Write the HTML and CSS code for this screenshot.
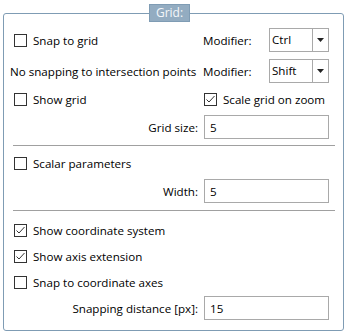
FILE: index.html
```html
<!DOCTYPE html>
<html lang="en">
<head>
    <meta charset="UTF-8">
    <title>Grid settings</title>
    <link rel="stylesheet" href="styles.css">
</head>
<body>
    <fieldset class="panel">
        <legend>Grid:</legend>

        <div class="row">
            <label class="check"><span class="box"></span>Snap to grid</label>
            <div class="right">
                <span class="mod-label">Modifier:</span>
                <div class="combo"><span class="combo-value">Ctrl</span><span class="combo-btn"><svg width="7" height="4" viewBox="0 0 7 4"><path d="M0 0h7L3.5 4z" fill="#222"/></svg></span></div>
            </div>
        </div>

        <div class="row spaced">
            <span class="text">No snapping to intersection points</span>
            <div class="right">
                <span class="mod-label">Modifier:</span>
                <div class="combo"><span class="combo-value">Shift</span><span class="combo-btn"><svg width="7" height="4" viewBox="0 0 7 4"><path d="M0 0h7L3.5 4z" fill="#222"/></svg></span></div>
            </div>
        </div>

        <div class="row">
            <label class="check"><span class="box"></span>Show grid</label>
            <div class="right">
                <label class="check flush"><span class="box"><svg width="11" height="11" viewBox="0 0 11 11"><path d="M1.5 5.5l2.5 2.5 5.5-6" fill="none" stroke="#333" stroke-width="1"/></svg></span>Scale grid on zoom</label>
            </div>
        </div>

        <div class="row">
            <span class="field-label">Grid size:</span>
            <input class="field" type="text" value="5">
        </div>

        <div class="sep"></div>

        <div class="row">
            <label class="check"><span class="box"></span>Scalar parameters</label>
        </div>

        <div class="row">
            <span class="field-label">Width:</span>
            <input class="field" type="text" value="5">
        </div>

        <div class="sep second"></div>

        <div class="row tight">
            <label class="check"><span class="box"><svg width="11" height="11" viewBox="0 0 11 11"><path d="M1.5 5.5l2.5 2.5 5.5-6" fill="none" stroke="#333" stroke-width="1"/></svg></span>Show coordinate system</label>
        </div>
        <div class="row tight">
            <label class="check"><span class="box"><svg width="11" height="11" viewBox="0 0 11 11"><path d="M1.5 5.5l2.5 2.5 5.5-6" fill="none" stroke="#333" stroke-width="1"/></svg></span>Show axis extension</label>
        </div>
        <div class="row tight">
            <label class="check"><span class="box"></span>Snap to coordinate axes</label>
        </div>
        <div class="row tight">
            <span class="field-label">Snapping distance [px]:</span>
            <input class="field" type="text" value="15">
        </div>
    </fieldset>
</body>
</html>
```

FILE: styles.css
```css
body {
    margin: 0;
    background-color: white;
    font-family: "Open Sans", "Noto Sans", sans-serif;
    font-size: 11.6px;
    color: #000;
}
.panel {
    box-sizing: border-box;
    width: 341px;
    margin: 4px 0 0 3px;
    padding: 4px 14px 9px 6px;
    border: 1px solid #7f9cb4;
    border-radius: 3px;
}
.panel legend {
    margin: 0 auto;
    padding: 0 6px;
    height: 18px;
    box-sizing: border-box;
    line-height: 16px;
    font-size: 12px;
    background-color: #93acc1;
    border: 1px solid #7f9cb4;
    color: #f4f7fa;
}
.row {
    display: flex;
    align-items: center;
    height: 28px;
}
.row.spaced {
    margin-top: 3px;
}
.row.tight {
    height: 26px;
}
.text {
    flex: 1;
    white-space: nowrap;
}
.check {
    flex: 1;
    display: flex;
    align-items: center;
    margin-left: 4px;
    white-space: nowrap;
}
.check.flush {
    margin-left: 0;
}
.box {
    width: 13px;
    height: 13px;
    box-sizing: border-box;
    border: 1px solid #333;
    background-color: white;
    margin-right: 6px;
    display: flex;
    align-items: center;
    justify-content: center;
}
.right {
    width: 125px;
    display: flex;
    align-items: center;
}
.mod-label {
    flex: 1;
    margin-left: -1px;
}
.combo {
    display: flex;
    width: 60px;
    height: 24px;
    box-sizing: border-box;
    border: 1px solid #a9a9a9;
}
.combo-value {
    flex: 1;
    padding-left: 2px;
    line-height: 22px;
}
.combo-btn {
    width: 15px;
    border-left: 1px solid #a9a9a9;
    display: flex;
    align-items: center;
    justify-content: center;
}
.field-label {
    flex: 1;
    text-align: right;
    padding-right: 6px;
    white-space: nowrap;
}
.field {
    width: 125px;
    height: 24px;
    box-sizing: border-box;
    border: 1px solid #a9a9a9;
    padding: 0 5px;
    margin: 0;
    font: inherit;
    color: #000;
    outline: none;
}
.sep {
    height: 1px;
    background-color: #a0a0a0;
    margin: 4px -6px 3px 3px;
}
.sep.second {
    margin: 5px -6px 6px 3px;
}
```
